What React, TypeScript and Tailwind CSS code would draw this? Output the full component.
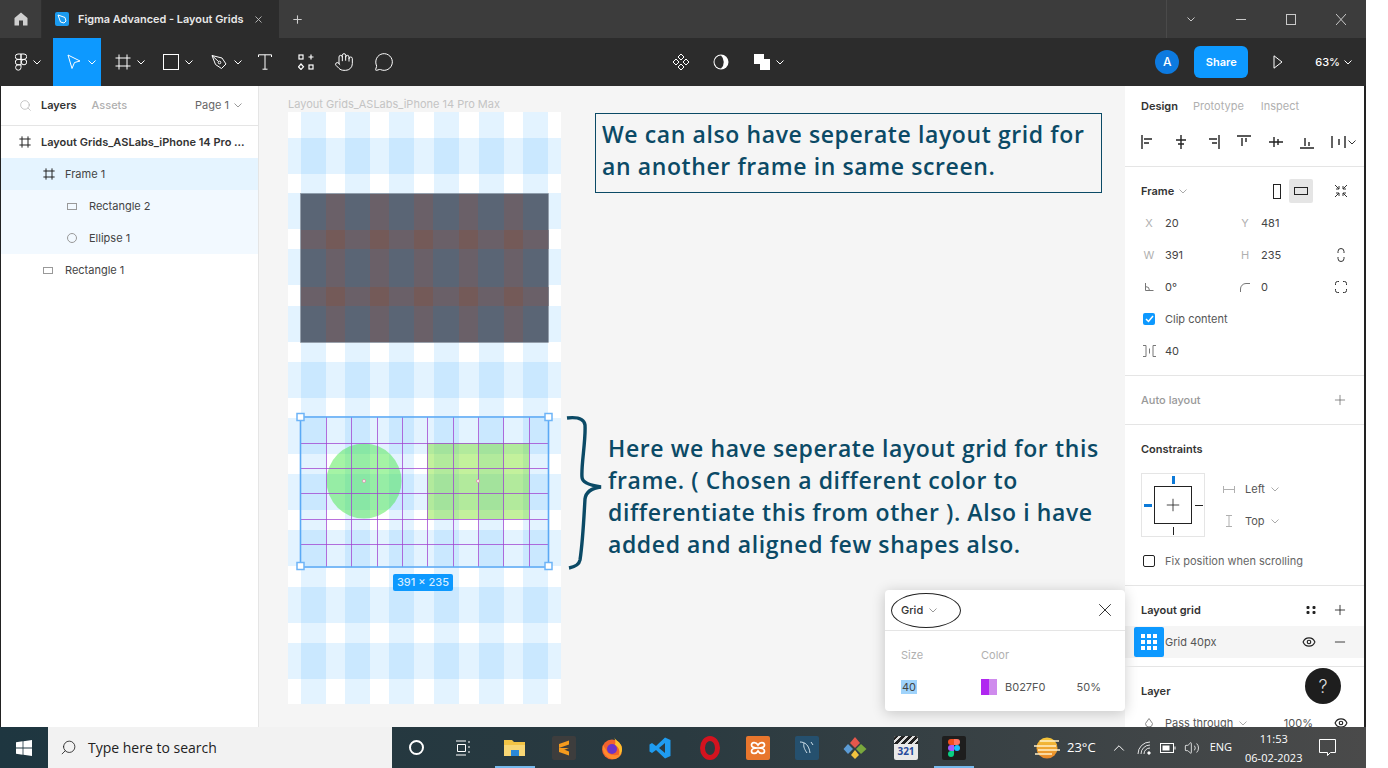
import type { ReactNode } from 'react';
import { X, Plus, Search, Minus, Eye, Hand, MessageCircle, ChevronUp, Volume2 } from 'lucide-react';

const sans = 'font-["Inter","Liberation_Sans",sans-serif]';

function Chevron({ className = '' }: { className?: string }) {
  return (
    <svg width="8" height="5" viewBox="0 0 8 5" fill="none" stroke="currentColor" className={className}>
      <path d="M0.5 0.5 L4 4 L7.5 0.5" />
    </svg>
  );
}

function FigmaLogo() {
  return (
    <svg width="12" height="18" viewBox="0 0 12 18" fill="none" stroke="white" strokeWidth="1">
      <path d="M6 1H3a2.7 2.7 0 0 0 0 5.4h3zM6 1h3a2.7 2.7 0 0 1 0 5.4H6zM6 6.4H3a2.7 2.7 0 0 0 0 5.4h3zM6 11.8H3A2.7 2.7 0 1 0 6 14.5z" />
      <circle cx="9" cy="9.1" r="2.7" />
    </svg>
  );
}

function FrameIcon({ color = 'white', size = 16 }: { color?: string; size?: number }) {
  return (
    <svg width={size} height={size} viewBox="0 0 16 16" fill="none" stroke={color} strokeWidth={16 / size}>
      <path d="M4 0.5V15.5M12 0.5V15.5M0.5 4H15.5M0.5 12H15.5" />
    </svg>
  );
}

function Toolbar() {
  return (
    <div className="flex h-12 items-center bg-[#2c2c2c] text-white">
      <div className="flex w-[53px] items-center pl-[15px] gap-[6px]">
        <FigmaLogo />
        <Chevron />
      </div>
      <div className="flex h-12 w-12 items-center bg-[#0d99ff] pl-[14px] gap-[7px]">
        <svg width="14" height="16" viewBox="0 0 14 16" fill="none" stroke="white" strokeWidth="1">
          <path d="M1 1 L13 7 L7.5 8.5 L5 14.5 Z" />
        </svg>
        <Chevron />
      </div>
      <div className="flex w-12 items-center pl-[14px] gap-[6px]">
        <FrameIcon />
        <Chevron />
      </div>
      <div className="flex w-12 items-center pl-[14px] gap-[6px]">
        <div className="h-4 w-4 border border-white" />
        <Chevron />
      </div>
      <div className="flex w-12 items-center pl-[14px] gap-[6px]">
        <svg width="17" height="16" viewBox="0 0 17 16" fill="none" stroke="white" strokeWidth="1">
          <path d="M1 1.5 L11 4 L15 10 L10.5 14.5 L4.5 10.5 Z M1 1.5 L7.5 7.5" />
          <circle cx="8.5" cy="8.5" r="1.3" />
        </svg>
        <Chevron />
      </div>
      <svg width="14" height="16" viewBox="0 0 14 16" fill="none" stroke="white" strokeWidth="1" className="ml-[13px]">
        <path d="M0.5 3V0.8H13.5V3M7 0.8V15.2M4.5 15.2H9.5" />
      </svg>
      <svg width="16" height="16" viewBox="0 0 16 16" fill="none" stroke="white" strokeWidth="1.2" className="ml-[26px]">
        <rect x="1" y="1" width="4" height="4" />
        <rect x="11" y="11" width="4" height="4" />
        <path d="M13 0.5V5.5M10.5 3H15.5M3 10L5.5 12.8L3 15.5L0.5 12.8Z" />
      </svg>
      <Hand size={20} strokeWidth={1.2} className="ml-[20px]" />
      <MessageCircle size={20} strokeWidth={1.2} className="ml-[20px]" />
      <div className="ml-[278px] flex items-center">
        <svg width="18" height="18" viewBox="0 0 18 18" fill="none" stroke="white" strokeWidth="1">
          <path d="M9 1L12 4L9 7L6 4ZM9 11L12 14L9 17L6 14ZM4 6L7 9L4 12L1 9ZM14 6L17 9L14 12L11 9Z" />
        </svg>
        <svg width="16" height="16" viewBox="0 0 16 16" className="ml-[23px]">
          <circle cx="8" cy="8" r="7.5" fill="white" />
          <path d="M8 1.5A6.5 6.5 0 0 0 8 14.5 A9 9 0 0 0 8 1.5Z" fill="#2c2c2c" />
        </svg>
        <svg width="16" height="16" viewBox="0 0 16 16" fill="white" className="ml-[25px]">
          <rect x="0" y="0" width="10" height="10" />
          <rect x="6" y="5" width="10" height="11" />
        </svg>
        <Chevron className="ml-[6px]" />
      </div>
      <div className="ml-auto flex items-center">
        <div className={`flex h-6 w-6 items-center justify-center rounded-full bg-[#0d7ae0] text-xs font-medium ${sans}`}>A</div>
        <div className={`ml-[15px] flex h-8 w-[54px] items-center justify-center rounded-md bg-[#0d99ff] text-[11px] font-semibold ${sans}`}>Share</div>
        <svg width="10" height="14" viewBox="0 0 10 14" fill="none" stroke="white" strokeWidth="1" className="ml-[25px]">
          <path d="M1 0.8V13.2L9 7Z" />
        </svg>
        <span className={`ml-[32px] text-[11px] font-medium ${sans}`}>63%</span>
        <Chevron className="ml-[4px] mr-[14px]" />
      </div>
    </div>
  );
}

function TitleBar() {
  return (
    <div className={`flex h-[38px] items-stretch bg-[#3c3c3c] text-white ${sans}`}>
      <div className="flex w-[42px] items-center justify-center border-r border-[#2f2f2f]">
        <svg width="14" height="14" viewBox="0 0 14 14" fill="#cfcfcf">
          <path d="M7 0.5L13.5 6V13.5H9V8.5H5V13.5H0.5V6Z" />
        </svg>
      </div>
      <div className="flex w-[237px] items-center bg-[#2c2c2c] pl-[13px]">
        <div className="flex h-[14px] w-[14px] items-center justify-center rounded-[2px] bg-[#1b9bf0]">
          <svg width="10" height="10" viewBox="0 0 10 10" fill="none" stroke="white" strokeWidth="1">
            <path d="M1 1L8 3.5L9 7L7 9L3.5 8Z" />
          </svg>
        </div>
        <span className="ml-[9px] whitespace-nowrap text-[10.9px] font-semibold text-[#e8e8e8]">Figma Advanced - Layout Grids</span>
        <X size={11} strokeWidth={2} className="ml-[10px] text-[#bdbdbd]" />
      </div>
      <div className="flex w-[36px] items-center justify-center">
        <Plus size={13} strokeWidth={2} className="text-[#cfcfcf]" />
      </div>
      <div className="ml-auto flex w-[200px] items-center border-l border-[#4a4a4a] text-[#c9c9c9]">
        <Chevron className="ml-[20px]" />
        <div className="ml-[41px] h-px w-[10px] bg-[#c9c9c9]" />
        <div className="ml-[40px] h-[11px] w-[10px] border border-[#c9c9c9]" />
        <svg width="10" height="11" viewBox="0 0 10 11" fill="none" stroke="#c9c9c9" className="ml-[40px]">
          <path d="M0 0L10 11M10 0L0 11" />
        </svg>
      </div>
    </div>
  );
}

function LayerRow({ label, indent, icon, bg, bold }: { label: string; indent: string; icon: ReactNode; bg?: string; bold?: boolean }) {
  return (
    <div className={`flex h-8 items-center ${indent} ${bg ?? ''}`}>
      <span className="flex w-[22px] items-center">{icon}</span>
      <span className={bold ? 'font-semibold text-[#333]' : 'text-[#444]'}>{label}</span>
    </div>
  );
}

function LeftPanel() {
  const rect = <div className="h-[7px] w-[10px] border border-[#999]" />;
  return (
    <div className={`w-[259px] shrink-0 border-r border-[#e5e5e5] border-l border-l-[#222] bg-white text-[11px] ${sans}`}>
      <div className="flex h-[40px] items-center border-b border-[#e5e5e5] pl-[18px] pr-[16px]">
        <Search size={13} strokeWidth={1.2} className="text-[#aaa]" />
        <span className="ml-[9px] font-semibold text-[#333]">Layers</span>
        <span className="ml-[15px] font-medium text-[#b0b0b0]">Assets</span>
        <span className="ml-auto text-[#666]">Page 1</span>
        <Chevron className="ml-[5px] text-[#999]" />
      </div>
      <LayerRow label="Layout Grids_ASLabs_iPhone 14 Pro ..." indent="pl-[18px]" bold icon={<FrameIcon color="#222" size={12} />} />
      <LayerRow label="Frame 1" indent="pl-[42px]" bg="bg-[#e5f4ff]" icon={<FrameIcon color="#222" size={12} />} />
      <LayerRow label="Rectangle 2" indent="pl-[66px]" bg="bg-[#f2f9ff]" icon={rect} />
      <LayerRow label="Ellipse 1" indent="pl-[66px]" bg="bg-[#f2f9ff]" icon={<div className="h-[10px] w-[10px] rounded-full border border-[#999]" />} />
      <LayerRow label="Rectangle 1" indent="pl-[42px]" icon={rect} />
    </div>
  );
}

const columns = [301, 345, 389, 434, 479, 523];
const rows = [138, 193, 249, 306, 362, 418, 474, 530, 587, 643];

function FrameDrawing() {
  return (
    <svg width="273" height="592" viewBox="288 112 273 592" className="absolute left-[29px] top-[26px]">
      <rect x="288" y="112" width="273" height="592" fill="white" />
      {columns.map((x) => (
        <rect key={x} x={x} y="112" width="25" height="592" fill="#0d99ff" fillOpacity="0.115" />
      ))}
      {rows.map((y) => (
        <rect key={y} x="288" y={y} width="273" height="36" fill="#0d99ff" fillOpacity="0.115" />
      ))}
      {/* Rectangle 1 */}
      <rect x="300.5" y="193.5" width="248" height="149" fill="#5a6575" stroke="#8a94a0" strokeWidth="0.5" />
      {columns.slice(0, 5).map((x) => (
        <rect key={x} x={x + 25} y="194" width={19} height="148" fill="#6a6068" />
      ))}
      {[230, 287].map((y) => (
        <g key={y}>
          <rect x="301" y={y} width="247.5" height="19" fill="#6a6068" />
          {columns.slice(0, 5).map((x) => (
            <rect key={x} x={x + 25} y={y} width={19} height="19" fill="#745a58" />
          ))}
        </g>
      ))}
      {/* Frame 1 contents */}
      <circle cx="364" cy="481" r="37.5" fill="#37e637" fillOpacity="0.45" />
      <rect x="427" y="443" width="102" height="76" fill="#69dc08" fillOpacity="0.4" />
      {[326, 351, 377, 402, 427, 453, 478, 503, 529].map((x) => (
        <line key={x} x1={x + 0.5} x2={x + 0.5} y1="417" y2="567" stroke="#a040d0" strokeOpacity="0.75" />
      ))}
      {[443, 468, 493, 519, 544].map((y) => (
        <line key={y} y1={y + 0.5} y2={y + 0.5} x1="301" x2="549" stroke="#a040d0" strokeOpacity="0.75" />
      ))}
      <circle cx="364" cy="481" r="1.5" fill="white" stroke="#d98aa8" strokeWidth="0.8" />
      <circle cx="478" cy="481" r="1.5" fill="white" stroke="#d98aa8" strokeWidth="0.8" />
      {/* selection */}
      <rect x="300.5" y="417" width="248" height="150" fill="none" stroke="#5aa9f5" strokeWidth="1.6" />
      {[[300.5, 417], [548.5, 417], [300.5, 566], [548.5, 566]].map(([x, y]) => (
        <rect key={`${x}-${y}`} x={x - 3.5} y={y - 3.5} width="7" height="7" fill="white" stroke="#6db4f7" strokeWidth="1.5" />
      ))}
    </svg>
  );
}

function Canvas() {
  return (
    <div className={`relative flex-1 bg-[#f5f5f5] ${sans}`}>
      <span className="absolute left-[29px] top-[11px] text-[11px] leading-[14px] text-[#c4c4c4]">Layout Grids_ASLabs_iPhone 14 Pro Max</span>
      <FrameDrawing />
      <div className="absolute left-[134px] top-[488px] flex h-[17px] w-[60px] items-center justify-center rounded-[2px] bg-[#0d99ff] text-[11px] font-medium text-[#d5ecff]">391 × 235</div>
      <div className={`absolute left-[336px] top-[27px] h-[80px] w-[507px] whitespace-nowrap border border-[#0b4a66] px-[6px] pt-[4px] text-[23px] font-semibold leading-[32px] tracking-[0.6px] text-[#0b4a66] font-["Open_Sans",sans-serif]`}>
        We can also have seperate layout grid for<br />
        an another frame in same screen.
      </div>
      <svg width="36" height="156" viewBox="0 0 36 156" fill="none" stroke="#0b4a66" strokeWidth="3.4" className="absolute left-[307px] top-[329px]">
        <path d="M1 3C10 2 18 3 19 10C20 25 15 50 16 62C16 67 22 70 35 72C27 73 20 76 19 84C18 100 17 125 14 145C13 150 8 152 3 153" />
      </svg>
      <div className={`absolute left-[349px] top-[346px] whitespace-nowrap text-[23px] font-semibold leading-[32px] tracking-[0.6px] text-[#0b4a66] font-["Open_Sans",sans-serif]`}>
        Here we have seperate layout grid for this<br />
        frame. ( Chosen a different color to<br />
        differentiate this from other ). Also i have<br />
        added and aligned few shapes also.
      </div>
      <div className="absolute left-[626px] top-[504px] w-[240px] rounded-sm bg-white text-[11px] shadow-[0_2px_14px_rgba(0,0,0,0.2)]">
        <div className="relative flex h-[41px] items-center border-b border-[#e5e5e5] px-[16px]">
          <span className="font-medium text-[#333]">Grid</span>
          <Chevron className="ml-[6px] text-[#999]" />
          <X size={22} strokeWidth={1} className="ml-auto mr-[-7px] text-[#222]" />
          <div className="absolute left-[6px] top-[3px] h-[35px] w-[70px] rounded-[50%] border border-[#222]" />
        </div>
        <div className="h-[80px] px-[16px] pt-[16px]">
          <div className="flex text-[#b0b0b0]">
            <span className="w-[80px]">Size</span>
            <span>Color</span>
          </div>
          <div className="mt-[15px] flex items-center">
            <span className="w-[80px]"><span className="bg-[#9fd3fb] px-[1px] text-[#444]">40</span></span>
            <div className="flex h-4 w-4">
              <div className="h-4 w-2 bg-[#b027f0]" />
              <div className="h-4 w-2 bg-[#cf8bed]" />
            </div>
            <span className="ml-[8px] text-[#555]">B027F0</span>
            <span className="ml-[31px] text-[#555]">50%</span>
          </div>
        </div>
      </div>
    </div>
  );
}

function AlignIcon({ d }: { d: string }) {
  return (
    <svg width="16" height="16" viewBox="0 0 16 16" fill="none" stroke="#222" strokeWidth="1.4">
      <path d={d} />
    </svg>
  );
}

function FieldCell({ label, value }: { label: ReactNode; value: string }) {
  return (
    <div className="flex w-[96px] items-center">
      <span className="flex w-[32px] justify-center text-[#b0b0b0]">{label}</span>
      <span className="text-[#444]">{value}</span>
    </div>
  );
}

function RightPanel() {
  return (
    <div className={`h-full w-[241px] shrink-0 overflow-hidden border-r-2 border-[#222] bg-white text-[11px] ${sans}`}>
      <div className="flex h-[41px] items-center pl-[16px]">
        <span className="font-semibold text-[#333]">Design</span>
        <span className="ml-[15px] text-[#b0b0b0]">Prototype</span>
        <span className="ml-[17px] text-[#b0b0b0]">Inspect</span>
      </div>
      <div className="flex h-[40px] items-start justify-between border-b border-[#e5e5e5] pl-[16px] pr-[8px] pt-[7px]">
        <AlignIcon d="M1 1V15M3 5H11M3 9H8" />
        <AlignIcon d="M8 1V15M3 6H13M5 10H11" />
        <AlignIcon d="M15 1V15M5 5H13M8 9H13" />
        <AlignIcon d="M1 2H15M6 4V12M10 4V8" />
        <AlignIcon d="M1 8H15M6 3V13M10 5V11" />
        <AlignIcon d="M1 14H15M6 4V12M10 8V12" />
        <div className="flex items-center gap-[1px]">
          <AlignIcon d="M1 2V14M8 5V11M14 2V14" />
          <Chevron className="text-[#333]" />
        </div>
      </div>
      <div className="h-[209px] border-b border-[#e5e5e5] pt-[8px]">
        <div className="flex h-[32px] items-center pl-[16px] pr-[16px]">
          <span className="font-semibold text-[#333]">Frame</span>
          <Chevron className="ml-[5px] text-[#aaa]" />
          <div className="ml-auto flex h-6 w-6 items-center justify-center">
            <div className="h-[15px] w-[8px] border border-[#222]" />
          </div>
          <div className="flex h-6 w-6 items-center justify-center rounded-[2px] bg-[#e5e5e5]">
            <div className="h-[8px] w-[14px] border border-[#222]" />
          </div>
          <svg width="14" height="14" viewBox="0 0 14 14" fill="none" stroke="#333" strokeWidth="1" className="ml-[21px]">
            <path d="M1 1L5 5M5 2V5H2M13 1L9 5M9 2V5H12M1 13L5 9M2 9H5V12M13 13L9 9M12 9H9V12" />
          </svg>
        </div>
        <div className="flex h-8 items-center pl-[8px]">
          <FieldCell label="X" value="20" />
          <FieldCell label="Y" value="481" />
        </div>
        <div className="flex h-8 items-center pl-[8px] pr-[19px]">
          <FieldCell label="W" value="391" />
          <FieldCell label="H" value="235" />
          <svg width="8" height="14" viewBox="0 0 8 14" fill="none" stroke="#333" className="ml-auto">
            <path d="M1 5V3.5A3 3 0 0 1 7 3.5V5M1 9V10.5A3 3 0 0 0 7 10.5V9" />
          </svg>
        </div>
        <div className="flex h-8 items-center pl-[8px] pr-[17px]">
          <FieldCell
            label={
              <svg width="9" height="8" viewBox="0 0 9 8" fill="none" stroke="#777">
                <path d="M0.5 0V7.5H8.5M0.5 3.5A4 4 0 0 1 4.5 7.5" />
              </svg>
            }
            value="0°"
          />
          <FieldCell
            label={
              <svg width="10" height="9" viewBox="0 0 10 9" fill="none" stroke="#777">
                <path d="M0.5 9V6A5.5 5.5 0 0 1 6 0.5H10" />
              </svg>
            }
            value="0"
          />
          <svg width="12" height="12" viewBox="0 0 12 12" fill="none" stroke="#333" className="ml-auto">
            <path d="M0.5 4V2.5A2 2 0 0 1 2.5 0.5H4M8 0.5H9.5A2 2 0 0 1 11.5 2.5V4M11.5 8V9.5A2 2 0 0 1 9.5 11.5H8M4 11.5H2.5A2 2 0 0 1 0.5 9.5V8" />
          </svg>
        </div>
        <div className="flex h-8 items-center pl-[18px]">
          <div className="flex h-3 w-3 items-center justify-center rounded-[2px] bg-[#0d99ff]">
            <svg width="9" height="8" viewBox="0 0 9 8" fill="none" stroke="white" strokeWidth="1.5"><path d="M1 4L3.5 6.5L8 1" /></svg>
          </div>
          <span className="ml-[10px] text-[#555]">Clip content</span>
        </div>
        <div className="flex h-8 items-center pl-[8px]">
          <FieldCell
            label={
              <svg width="13" height="12" viewBox="0 0 13 12" fill="none" stroke="#777">
                <path d="M0 0.5H3V11.5H0M13 0.5H10V11.5H13M6.5 3.5V8.5" />
              </svg>
            }
            value="40"
          />
        </div>
      </div>
      <div className="flex h-[49px] items-center justify-between border-b border-[#e5e5e5] pl-[16px] pr-[16px]">
        <span className="font-medium text-[#999]">Auto layout</span>
        <Plus size={16} strokeWidth={1} className="text-[#555]" />
      </div>
      <div className="h-[161px] border-b border-[#e5e5e5]">
        <div className="flex h-[48px] items-center pl-[16px] font-semibold text-[#333]">Constraints</div>
        <div className="flex pl-[16px]">
          <div className="relative h-[64px] w-[64px] border border-[#e5e5e5]">
            <div className="absolute left-[12px] top-[12px] flex h-[38px] w-[38px] items-center justify-center border border-[#222]">
              <Plus size={20} strokeWidth={1} className="text-[#222]" />
            </div>
            <div className="absolute left-[30px] top-[2px] h-[8px] w-[3px] bg-[#0d7ad8]" />
            <div className="absolute left-[31px] top-[53px] h-[8px] w-px bg-[#222]" />
            <div className="absolute left-[2px] top-[30px] h-[3px] w-[8px] bg-[#0d7ad8]" />
            <div className="absolute left-[53px] top-[31px] h-px w-[8px] bg-[#222]" />
          </div>
          <div className="ml-[18px] flex flex-col">
            <div className="flex h-8 items-center text-[#555]">
              <svg width="12" height="7" viewBox="0 0 12 7" fill="none" stroke="#b0b0b0"><path d="M0.5 0V7M11.5 0V7M0.5 3.5H11.5" /></svg>
              <span className="ml-[10px]">Left</span>
              <Chevron className="ml-[6px] text-[#aaa]" />
            </div>
            <div className="flex h-8 items-center text-[#555]">
              <svg width="12" height="12" viewBox="0 0 12 12" fill="none" stroke="#b0b0b0"><path d="M3 0.5H9M3 11.5H9M6 0.5V11.5" /></svg>
              <span className="ml-[10px]">Top</span>
              <Chevron className="ml-[6px] text-[#aaa]" />
            </div>
          </div>
        </div>
        <div className="mt-[8px] flex h-[32px] items-center pl-[18px]">
          <div className="h-3 w-3 rounded-[2px] border border-[#222]" />
          <span className="ml-[10px] text-[#666]">Fix position when scrolling</span>
        </div>
      </div>
      <div className="flex h-[40px] items-center pl-[16px] pr-[16px] pt-[8px]">
        <span className="font-semibold text-[#333]">Layout grid</span>
        <svg width="10" height="10" viewBox="0 0 10 10" fill="#222" className="ml-auto">
          <rect x="0.5" y="1" width="3" height="3" rx="1" /><rect x="6.5" y="1" width="3" height="3" rx="1" /><rect x="0.5" y="6" width="3" height="3" rx="1" /><rect x="6.5" y="6" width="3" height="3" rx="1" />
        </svg>
        <Plus size={16} strokeWidth={1.2} className="ml-[16px] text-[#111]" />
      </div>
      <div className="flex h-8 items-center bg-[#f5f5f5] pr-[16px]">
        <div className="ml-[9px] flex h-[30px] w-[30px] items-center justify-center rounded-[2px] bg-[#0d99ff]">
          <div className="grid grid-cols-3 gap-[2px]">
            {Array.from({ length: 9 }).map((_, i) => (
              <div key={i} className="h-[4px] w-[4px] bg-white" />
            ))}
          </div>
        </div>
        <span className="ml-px text-[#555]">Grid 40px</span>
        <Eye size={14} className="ml-auto mr-[-1px] text-[#222]" />
        <Minus size={16} strokeWidth={1.2} className="ml-[17px] text-[#111]" />
      </div>
      <div className="relative mt-[8px] border-t border-[#e5e5e5]">
        <div className="mt-[8px] flex h-[32px] items-center pl-[16px] font-semibold text-[#333]">Layer</div>
        <div className="flex h-8 items-center pl-[20px] pr-[16px] text-[#555]">
          <svg width="8" height="10" viewBox="0 0 8 10" fill="none" stroke="#888"><path d="M4 0.5L7.5 5.5A3.5 3.5 0 0 1 .5 5.5Z" /></svg>
          <span className="ml-[12px]">Pass through</span>
          <Chevron className="ml-[6px] text-[#aaa]" />
          <span className="ml-auto">100%</span>
          <Eye size={14} className="ml-[21px] text-[#222]" />
        </div>
        <div className="absolute left-[180px] top-[1px] flex h-9 w-9 items-center justify-center rounded-full bg-[#1e1e1e] text-[18px] font-light text-[#ddd]">?</div>
      </div>
    </div>
  );
}

function Taskbar() {
  return (
    <div className={`flex h-[41px] items-center bg-gradient-to-r from-[#1e3640] via-[#2a3a40] to-[#4a4a4a] text-white font-["Open_Sans",sans-serif]`}>
      <div className="flex w-[48px] justify-center">
        <svg width="16" height="16" viewBox="0 0 16 16" fill="white">
          <path d="M0 2.2L6.6 1.3V7.6H0ZM7.4 1.2L16 0V7.6H7.4ZM0 8.4H6.6V14.7L0 13.8ZM7.4 8.4H16V16L7.4 14.8Z" />
        </svg>
      </div>
      <div className="flex h-[41px] w-[344px] items-center bg-[#f2f2f2] pl-[12px] text-[#222]">
        <Search size={17} strokeWidth={1.2} className="-scale-x-100" />
        <span className="ml-[11px] whitespace-nowrap text-[14px]">Type here to search</span>
      </div>
      <div className="ml-[17px] h-[15px] w-[15px] rounded-full border-2 border-white" />
      <svg width="16" height="16" viewBox="0 0 16 16" fill="none" stroke="white" className="ml-[31px]">
        <path d="M1 1H11M1 15H11M2.5 4.5H10.5V11.5H2.5ZM14 1V3M14 6V8M14 11V13" />
      </svg>
      <div className="relative ml-[24px] flex h-[41px] w-[40px] items-center justify-center">
        <svg width="22" height="18" viewBox="0 0 22 18">
          <path d="M0 1H8L10 3H21V17H0Z" fill="#f3c445" />
          <path d="M0 6H21V17H0Z" fill="#f8d775" />
          <rect x="7" y="11" width="8" height="6" fill="#2b88d8" />
        </svg>
        <div className="absolute bottom-0 left-0 h-[2px] w-[40px] bg-[#76b9ed]" />
      </div>
      <div className="ml-[17px] flex h-[24px] w-[24px] items-center justify-center rounded-[2px] bg-[#3d3d3d]">
        <svg width="12" height="16" viewBox="0 0 12 16" fill="#f59b1e">
          <path d="M11 0.5V4.5L1 8V4ZM1 7.5L11 11.5V15.5L1 12Z" />
          <path d="M11 8L1 11.8V8Z" />
        </svg>
      </div>
      <svg width="24" height="24" viewBox="0 0 24 24" className="ml-[24px]">
        <circle cx="12" cy="13.5" r="10" fill="#f2622e" />
        <path d="M14 1C15 4 19 5 21 9C23 13 22 18 18 21C21 16 19 11 15 9C16 6 15 3 14 1Z" fill="#ffbf2c" />
        <path d="M3 9C2 14 4 21 12 23C17 23.5 20 21 22 17C18 20 12 20 8 17Z" fill="#ff8a2c" />
        <circle cx="12" cy="13" r="5" fill="#6b34c9" />
      </svg>
      <svg width="22" height="24" viewBox="0 0 22 22" className="ml-[25px]">
        <path d="M16 0.5L21.5 3V19L16 21.5L7 13L3 16L0.5 14.5V7.5L3 6L7 9Z" fill="#1f9cf0" />
        <path d="M16 6L10 11L16 16Z" fill="#2a3a40" />
      </svg>
      <div className="ml-[29px] h-[24px] w-[20px] rounded-[50%] border-[5px] border-[#d3131f]" />
      <div className="ml-[26px] flex h-[24px] w-[24px] items-center justify-center rounded-[2px] bg-[#e8762d]">
        <svg width="16" height="16" viewBox="0 0 16 16" fill="none" stroke="white" strokeWidth="1.7">
          <path d="M8 5C6 1.5 1.5 2 1.5 5C1.5 7 4 8 8 8C4 8 1.5 9 1.5 11C1.5 14 6 14.5 8 11C10 14.5 14.5 14 14.5 11C14.5 9 12 8 8 8C12 8 14.5 7 14.5 5C14.5 2 10 1.5 8 5Z" />
        </svg>
      </div>
      <div className="ml-[25px] flex h-[24px] w-[24px] items-center justify-center rounded-[2px] bg-[#25506e]">
        <svg width="18" height="18" viewBox="0 0 18 18" fill="none" stroke="#cfe0ea"><path d="M2 3C7 3 11 6 12 14M6 4C5 8 7 11 9 14M13 3L15 6" /></svg>
      </div>
      <svg width="24" height="24" viewBox="0 0 24 24" className="ml-[24px]">
        <path d="M12 1L17 7L12 12L7 7Z" fill="#e4574c" />
        <path d="M5 8L10 13L5 18L0.5 13Z" fill="#5b9bd5" />
        <path d="M18 8L23.5 13L18 18L13 13Z" fill="#7aa83d" />
        <path d="M12 14L16 19L12 23L8 19Z" fill="#f2c23e" />
      </svg>
      <div className="ml-[27px] flex h-[24px] w-[24px] flex-col overflow-hidden rounded-[2px] bg-[#e9e9e9]">
        <div className="h-[8px] bg-[repeating-linear-gradient(135deg,#222_0,#222_3px,#ddd_3px,#ddd_5px)]" />
        <span className="text-center text-[10px] font-bold leading-[15px] text-[#274b9c]">321</span>
      </div>
      <div className="relative ml-[16px] flex h-[41px] w-[40px] items-center justify-center">
        <div className="flex h-[24px] w-[24px] items-center justify-center rounded-[2px] bg-[#1e1e1e]">
          <svg width="12" height="18" viewBox="0 0 12 18">
            <path d="M6 0H3a3 3 0 0 0 0 6h3z" fill="#f24e1e" />
            <path d="M6 0h3a3 3 0 0 1 0 6H6z" fill="#ff7262" />
            <path d="M6 6H3a3 3 0 0 0 0 6h3z" fill="#a259ff" />
            <circle cx="9" cy="9" r="3" fill="#1abcfe" />
            <path d="M6 12H3a3 3 0 1 0 3 3z" fill="#0acf83" />
          </svg>
        </div>
        <div className="absolute bottom-0 left-0 h-[2px] w-[40px] bg-[#76b9ed]" />
      </div>
      <svg width="26" height="22" viewBox="0 0 26 22" className="ml-[60px]">
        <defs>
          <linearGradient id="sun" x1="0" y1="0" x2="0" y2="1">
            <stop offset="0" stopColor="#f5c63a" />
            <stop offset="1" stopColor="#e8872b" />
          </linearGradient>
        </defs>
        <circle cx="13" cy="11" r="10.5" fill="url(#sun)" />
        <path d="M6 4H25M0 9H22M4 13H26M1 17H18" stroke="#fff0c8" strokeWidth="1.3" />
      </svg>
      <span className="ml-[7px] text-[13px] text-white">23°C</span>
      <ChevronUp size={18} strokeWidth={1.3} className="ml-[14px]" />
      <svg width="14" height="14" viewBox="0 0 14 14" fill="none" stroke="white" className="ml-[9px]">
        <path d="M1 13A12 12 0 0 1 13 1M4 13A9 9 0 0 1 13 4M7 13A6 6 0 0 1 13 7" strokeOpacity="0.85" />
        <circle cx="12" cy="12" r="1.2" fill="white" />
      </svg>
      <svg width="16" height="10" viewBox="0 0 16 10" fill="none" stroke="white" className="ml-[9px]">
        <rect x="0.5" y="0.5" width="13" height="9" />
        <rect x="2.5" y="2.5" width="7" height="5" fill="white" stroke="none" />
        <path d="M15 3.5V6.5" />
      </svg>
      <Volume2 size={16} strokeWidth={1.2} className="ml-[8px]" />
      <span className="ml-[10px] text-[11px]">ENG</span>
      <div className="ml-[13px] flex flex-col items-center whitespace-nowrap text-[11px] leading-[19px]">
        <span>11:53</span>
        <span>06-02-2023</span>
      </div>
      <svg width="17" height="17" viewBox="0 0 17 17" fill="none" stroke="white" className="ml-[17px]">
        <path d="M0.5 0.5H16.5V13.5H11.5L8.5 16.5V13.5H0.5Z" />
      </svg>
    </div>
  );
}

export default function App() {
  return (
    <div className="h-[768px] w-[1388px] overflow-hidden bg-white">
      <div className="flex h-[768px] w-[1366px] flex-col">
        <TitleBar />
        <Toolbar />
        <div className="flex h-[641px] min-h-0">
          <LeftPanel />
          <Canvas />
          <RightPanel />
        </div>
        <Taskbar />
      </div>
    </div>
  );
}
